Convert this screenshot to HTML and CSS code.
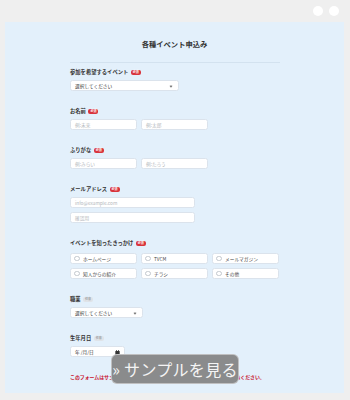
FILE: index.html
```html
<!DOCTYPE html>
<html lang="ja">
<head>
<meta charset="utf-8">
<title>各種イベント申込み</title>
<link rel="stylesheet" href="styles.css">
</head>
<body>
<div class="topbar">
  <span class="dot"></span>
  <span class="dot"></span>
</div>
<div class="panel">
  <h1 class="title">各種イベント申込み</h1>
  <div class="divider"></div>
  <div class="form">
    <div class="group">
      <div class="label">参加を希望するイベント<span class="badge req">必須</span></div>
      <div class="row">
        <div class="field select w-event">選択してください<span class="chev"></span></div>
      </div>
    </div>
    <div class="group">
      <div class="label">お名前<span class="badge req">必須</span></div>
      <div class="row">
        <div class="field ph w-half">例:未来</div>
        <div class="field ph w-half">例:太郎</div>
      </div>
    </div>
    <div class="group">
      <div class="label">ふりがな<span class="badge req">必須</span></div>
      <div class="row">
        <div class="field ph w-half">例:みらい</div>
        <div class="field ph w-half">例:たろう</div>
      </div>
    </div>
    <div class="group">
      <div class="label">メールアドレス<span class="badge req">必須</span></div>
      <div class="col">
        <div class="field ph w-mail">info@example.com</div>
        <div class="field ph w-mail">確認用</div>
      </div>
    </div>
    <div class="group">
      <div class="label">イベントを知ったきっかけ<span class="badge req">必須</span></div>
      <div class="radios">
        <div class="field radio"><span class="circle"></span>ホームページ</div>
        <div class="field radio"><span class="circle"></span>TVCM</div>
        <div class="field radio"><span class="circle"></span>メールマガジン</div>
        <div class="field radio"><span class="circle"></span>知人からの紹介</div>
        <div class="field radio"><span class="circle"></span>チラシ</div>
        <div class="field radio"><span class="circle"></span>その他</div>
      </div>
    </div>
    <div class="group">
      <div class="label">職業<span class="badge opt">任意</span></div>
      <div class="row">
        <div class="field select w-job">選択してください<span class="chev"></span></div>
      </div>
    </div>
    <div class="group">
      <div class="label">生年月日<span class="badge opt">任意</span></div>
      <div class="row">
        <div class="field date w-date">年 /月/日
          <svg class="cal" viewBox="0 0 8 8" width="5" height="5"><rect x="0.5" y="1.5" width="7" height="6" rx="0.8" fill="#333"/><rect x="1.8" y="0" width="1.2" height="2" fill="#333"/><rect x="5" y="0" width="1.2" height="2" fill="#333"/></svg>
        </div>
      </div>
    </div>
    <p class="notice">このフォームはサンプルです。実際に送信されることはありませんのでご了承ください。</p>
  </div>
  <div class="sample-btn">» サンプルを見る</div>
</div>
</body>
</html>
```

FILE: styles.css
```css
* { box-sizing: border-box; }
html, body {
  margin: 0;
  padding: 0;
}
body {
  width: 350px;
  height: 400px;
  overflow: hidden;
  background: #efefef;
  font-family: "Noto Sans CJK JP", "Noto Sans", sans-serif;
  color: #333;
}
.topbar {
  height: 22px;
  display: flex;
  justify-content: flex-end;
  align-items: center;
  gap: 6px;
  padding-right: 11px;
}
.dot {
  width: 10px;
  height: 10px;
  border-radius: 50%;
  background: #fff;
}
.panel {
  position: relative;
  margin: 0 6px 0 5px;
  height: 371px;
  background: #e3f0fb;
  padding-top: 17px;
}
.title {
  margin: 0;
  text-align: center;
  font-size: 7.3px;
  line-height: 10px;
  font-weight: 700;
  color: #333;
}
.divider {
  margin: 13px 0 0 65px;
  width: 210px;
  height: 1px;
  background: #d3e2ef;
}
.form {
  margin-left: 65px;
  width: 210px;
  padding-top: 5px;
}
.group {
  margin-bottom: 16px;
}
.label {
  display: flex;
  align-items: center;
  height: 8px;
  font-size: 5.3px;
  font-weight: 700;
  color: #333;
  margin-bottom: 4px;
}
.badge {
  display: inline-flex;
  align-items: center;
  justify-content: center;
  margin-left: 2.5px;
  height: 5px;
  padding: 0 2px;
  border-radius: 2px;
  font-size: 3px;
  font-weight: 700;
}
.badge.req {
  background: #d8343c;
  color: #fff;
}
.badge.opt {
  background: #dfe3e8;
  color: #9aa0a6;
}
.row {
  display: flex;
  gap: 4px;
}
.col {
  display: flex;
  flex-direction: column;
  gap: 4px;
}
.field {
  position: relative;
  display: flex;
  align-items: center;
  height: 11px;
  background: #fff;
  border: 0.5px solid #dbe3ec;
  border-radius: 2.5px;
  font-size: 4.7px;
  padding-left: 4px;
  color: #333;
}
.ph { color: #b3b7bc; }
.w-event { width: 109px; }
.w-half { width: 67px; }
.w-mail { width: 125px; }
.w-job { width: 73px; }
.w-date { width: 55px; }
.chev {
  position: absolute;
  right: 6px;
  top: 3.6px;
  width: 2px;
  height: 2px;
  border-right: 0.5px solid #777;
  border-bottom: 0.5px solid #777;
  transform: rotate(45deg);
}
.cal {
  position: absolute;
  right: 4px;
  top: 3px;
}
.radios {
  display: grid;
  grid-template-columns: 67px 67px 67px;
  column-gap: 4px;
  row-gap: 4px;
  padding-top: 2px;
}
.radio {
  padding-left: 3px;
  color: #444;
}
.circle {
  width: 5.5px;
  height: 5.5px;
  border-radius: 50%;
  border: 0.5px solid #c3c8ce;
  margin-right: 3.5px;
  background: #fff;
}
.notice {
  margin: 0;
  font-size: 4.9px;
  line-height: 8px;
  font-weight: 700;
  color: #c8102e;
}
.sample-btn {
  position: absolute;
  left: 106px;
  top: 332px;
  width: 128px;
  height: 30px;
  display: flex;
  align-items: center;
  justify-content: center;
  background: #8a8b8c;
  border: 1px solid rgba(255,255,255,0.45);
  border-radius: 6px;
  color: #f4f4f4;
  font-size: 16px;
  letter-spacing: 0.3px;
}
```
